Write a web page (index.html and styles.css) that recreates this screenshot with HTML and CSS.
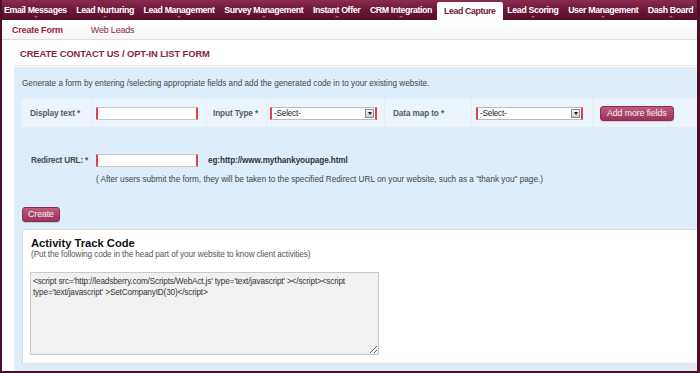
FILE: index.html
```html
<!DOCTYPE html>
<html lang="en">
<head>
  <meta charset="UTF-8">
  <title>Lead Capture - Create Form</title>
  <link rel="stylesheet" href="styles.css">
</head>
<body>
  <div class="frame">
    <div class="topnav">
      <a class="nav-item">Email Messages</a>
      <a class="nav-item">Lead Nurturing</a>
      <a class="nav-item">Lead Management</a>
      <a class="nav-item">Survey Management</a>
      <a class="nav-item">Instant Offer</a>
      <a class="nav-item">CRM Integration</a>
      <a class="nav-item nav-active">Lead Capture</a>
      <a class="nav-item">Lead Scoring</a>
      <a class="nav-item">User Management</a>
      <a class="nav-item">Dash Board</a>
    </div>
    <div class="subnav">
      <a class="sub-item sub-active">Create Form</a>
      <a class="sub-item">Web Leads</a>
    </div>
    <div class="main">
      <div class="page-title">CREATE CONTACT US / OPT-IN LIST FORM</div>
      <div class="panel">
        <div class="intro">Generate a form by entering /selecting appropriate fields and add the generated code in to your existing website.</div>
        <div class="field-row">
          <div class="cell cell-label lbl-display">Display text *</div>
          <div class="cell cell-input"><input type="text" class="txt"></div>
          <div class="cell cell-label lbl-type">Input Type *</div>
          <div class="cell cell-select"><div class="select"><span class="select-text">-Select-</span><span class="select-arrow"></span></div></div>
          <div class="cell cell-label lbl-map">Data map to *</div>
          <div class="cell cell-select2"><div class="select"><span class="select-text">-Select-</span><span class="select-arrow"></span></div></div>
          <div class="cell cell-btn"><button class="btn">Add more fields</button></div>
        </div>
        <div class="redirect-row">
          <div class="redirect-label">Redirect URL: *</div>
          <input type="text" class="txt">
          <div class="example">eg:http://www.mythankyoupage.html</div>
        </div>
        <div class="note">( After users submit the form, they will be taken to the specified Redirect URL on your website, such as a "thank you" page.)</div>
        <button class="btn btn-create">Create</button>
        <div class="track-box">
          <div class="track-title">Activity Track Code</div>
          <div class="track-sub">(Put the following code in the head part of your website to know client activities)</div>
          <textarea class="code" readonly>&lt;script src='http://leadsberry.com/Scripts/WebAct.js' type='text/javascript' &gt;&lt;/script&gt;&lt;script type='text/javascript' &gt;SetCompanyID(30)&lt;/script&gt;</textarea>
        </div>
      </div>
    </div>
  </div>
</body>
</html>
```

FILE: styles.css
```css
body {
  margin: 0;
  background: #4e0e27;
  font-family: "Liberation Sans", Arial, sans-serif;
  font-size: 8.2px;
  color: #444;
}

.frame {
  height: 371px;
  margin: 0 3px 0 2px;
  background: #fff;
  display: flex;
  flex-direction: column;
  overflow: hidden;
}

/* top menu */
.topnav {
  display: flex;
  height: 20px;
  margin: 0 -3px 0 -2px;
  background: linear-gradient(#8a2c4f, #6a1738 55%, #5a0f2d);
  border-bottom: 1px solid #4e0e27;
  box-sizing: border-box;
}

.nav-item {
  position: relative;
  display: flex;
  align-items: center;
  padding: 0 4.8px;
  color: #fff;
  font-weight: bold;
  font-size: 8.8px;
  letter-spacing: -0.38px;
  white-space: nowrap;
}

.nav-item:first-child {
  padding-left: 4px;
}

.nav-item::after {
  content: "";
  position: absolute;
  left: 50%;
  bottom: 1px;
  margin-left: -2px;
  border-left: 2px solid transparent;
  border-right: 2px solid transparent;
  border-top: 2px solid rgba(255, 255, 255, 0.35);
}

.nav-active {
  margin-top: 2px;
  margin-bottom: -1px;
  padding: 0 7px;
  background: #fff;
  color: #6e1738;
  border-radius: 2px 2px 0 0;
}

.nav-active::after {
  display: none;
}

/* sub menu */
.subnav {
  display: flex;
  align-items: center;
  height: 20px;
  padding-left: 10px;
  background: linear-gradient(#fff, #f6f6f6);
  border-bottom: 1px solid #dedede;
  box-sizing: border-box;
}

.sub-item {
  font-size: 9px;
  letter-spacing: -0.2px;
  color: #8e2a4d;
  margin-right: 28px;
}

.sub-active {
  font-weight: bold;
  color: #9a1c42;
}

.main {
  flex: 1;
  display: flex;
  flex-direction: column;
  padding-left: 12px;
}

.page-title {
  height: 25px;
  padding-left: 6px;
  line-height: 27px;
  font-weight: bold;
  font-size: 9.4px;
  letter-spacing: -0.1px;
  color: #8a1f45;
  border-bottom: 1px solid #e3e3e3;
  margin-bottom: 1px;
}

.panel {
  flex: 1;
  background: #ddeefa;
  padding: 11px 0 7px 8px;
  display: flex;
  flex-direction: column;
  align-items: flex-start;
}

.intro {
  line-height: 12px;
  margin-bottom: 9px;
  color: #444;
}

/* field row */
.field-row {
  align-self: stretch;
  display: grid;
  grid-template-columns: 70px 115px 60px 118px 87px 121px 1fr;
  height: 28px;
  background: #ebf4fb;
}

.cell {
  display: flex;
  align-items: center;
  border-right: 1px solid #e2edf6;
}

.cell-label {
  font-weight: bold;
  color: #545a62;
  letter-spacing: -0.1px;
}

.lbl-display { padding-left: 8px; }
.lbl-type { padding-left: 6px; }
.lbl-map { padding-left: 8px; }
.cell-input { padding-left: 4px; }
.cell-select { padding-left: 3px; }
.cell-select2 { padding-left: 4px; }
.cell-btn { padding-left: 7px; border-right: none; }

.txt {
  width: 102px;
  height: 13px;
  box-sizing: border-box;
  margin: 0;
  padding: 0 2px;
  background: #fff;
  border: 1px solid #c9c9c9;
  border-left: 2px solid #e2404b;
  border-right: 2px solid #e2404b;
  border-radius: 1px;
  font-size: 8.5px;
}

.select {
  display: flex;
  align-items: center;
  width: 107px;
  height: 13px;
  box-sizing: border-box;
  background: #fff;
  border: 1px solid #bcbcbc;
  border-left: 2px solid #e2404b;
  border-right: 2px solid #e2404b;
}

.select-text {
  flex: 1;
  padding-left: 2px;
  color: #222;
  letter-spacing: -0.2px;
}

.select-arrow {
  position: relative;
  width: 9px;
  height: 9px;
  margin-right: 1px;
  background: linear-gradient(#f4f4f4, #cfcfcf);
  border: 1px solid #8c8c8c;
  box-sizing: border-box;
}

.select-arrow::after {
  content: "";
  position: absolute;
  left: 1.5px;
  top: 2.5px;
  border-left: 2.5px solid transparent;
  border-right: 2.5px solid transparent;
  border-top: 3px solid #111;
}

.btn {
  height: 15px;
  padding: 0 6px;
  margin: 0;
  border: 1px solid #8d2c50;
  border-radius: 3px;
  background: linear-gradient(#bd5b7f, #9e3259);
  color: #fbeef3;
  font-family: "Liberation Sans", Arial, sans-serif;
  font-size: 8.8px;
  letter-spacing: -0.1px;
  line-height: 13px;
  box-shadow: 0 1px 1px rgba(0, 0, 0, 0.15);
}

/* redirect */
.redirect-row {
  display: flex;
  align-items: center;
  margin-top: 27px;
  height: 13px;
}

.redirect-label {
  width: 66px;
  padding-right: 4px;
  text-align: right;
  font-weight: bold;
  color: #4a4a4a;
  letter-spacing: -0.2px;
}

.redirect-row .txt {
  margin-left: 4px;
}

.example {
  margin-left: 10px;
  font-weight: bold;
  color: #333;
  letter-spacing: -0.1px;
}

.note {
  margin: 7px 0 0 74px;
  line-height: 12px;
  color: #444;
}

.btn-create {
  margin-top: 21px;
  width: 38px;
  padding: 0;
}

/* activity track code */
.track-box {
  align-self: stretch;
  margin-top: 7px;
  flex: 1;
  background: #fff;
  border: 1px solid #dcdcdc;
  border-right: none;
  padding: 7px 0 6px 7px;
  display: flex;
  flex-direction: column;
  align-items: flex-start;
}

.track-title {
  padding-left: 1px;
  font-size: 11.2px;
  font-weight: bold;
  color: #111;
  line-height: 13px;
}

.track-sub {
  padding-left: 1px;
  font-size: 8.2px;
  line-height: 10px;
  color: #555;
  letter-spacing: -0.1px;
}

.code {
  margin: 12px 0 0 0;
  width: 349px;
  height: 83px;
  box-sizing: border-box;
  padding: 3px 2px;
  background: #f1f1f1;
  border: 1px solid #c8c8c8;
  font-family: "Liberation Sans", Arial, sans-serif;
  font-size: 8.2px;
  line-height: 11px;
  letter-spacing: -0.15px;
  color: #333;
  resize: both;
  outline: none;
}
```
